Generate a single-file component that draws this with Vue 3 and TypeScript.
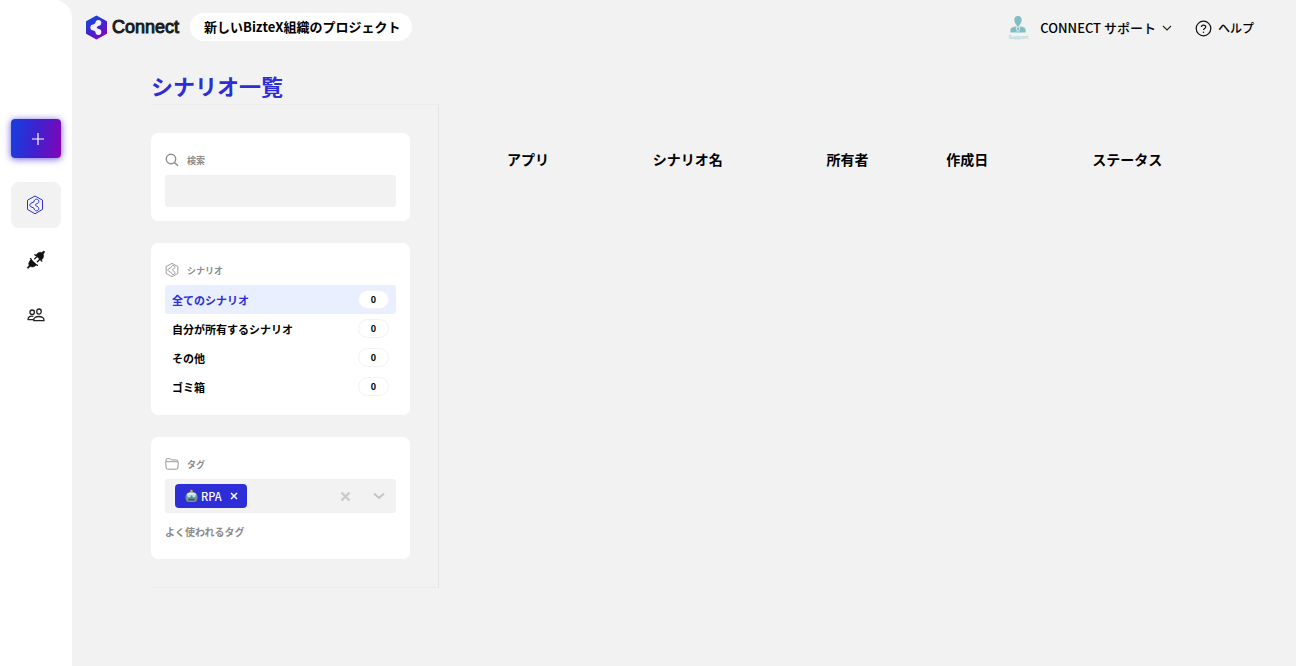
<script setup lang="ts">
import { ref } from 'vue'

interface ScenarioFilter {
  id: string
  label: string
  count: number
}

const filters: ScenarioFilter[] = [
  { id: 'all', label: '全てのシナリオ', count: 0 },
  { id: 'mine', label: '自分が所有するシナリオ', count: 0 },
  { id: 'other', label: 'その他', count: 0 },
  { id: 'trash', label: 'ゴミ箱', count: 0 },
]

const columns: string[] = ['アプリ', 'シナリオ名', '所有者', '作成日', 'ステータス']

const activeFilter = ref<string>('all')
const keyword = ref<string>('')
const tags = ref<string[]>(['RPA'])

function removeTag(tag: string): void {
  tags.value = tags.value.filter((t) => t !== tag)
}
</script>

<template>
  <div class="page">
    <nav class="rail" aria-label="メニュー">
      <button class="create" type="button" aria-label="新規作成">
        <svg width="14" height="14" viewBox="0 0 14 14"><path d="M7 1v12M1 7h12" stroke="#fff" stroke-width="1.2" fill="none" /></svg>
      </button>
      <a class="rail-item active" href="#scenarios" aria-label="シナリオ">
        <svg width="18" height="20" viewBox="0 0 18 20" fill="none" stroke="#2d2ed8" stroke-width="1" stroke-linejoin="round">
          <path d="M9 1l7.500 4.200v9.200L9 18.800l-7.500-4.400V5.200z" />
          <path d="M4.800 8.300 8 6.800C8 5.300 9.200 4.200 10.500 4.200c1.400 0 2.300 1 2.300 2.200 0 1.700-1.700 2.300-2.600 2.600-.9.400-.9 1.600 0 2 .9.300 2.600.9 2.600 2.600 0 1.200-.9 2.200-2.300 2.200-1.300 0-2.500-1.100-2.500-2.600L4.800 11.700C3.500 10.900 3.500 9.100 4.800 8.300z" />
        </svg>
      </a>
      <a class="rail-item" href="#connections" aria-label="接続">
        <svg width="20" height="20" viewBox="0 0 20 20" fill="#111" stroke="#111" stroke-linecap="round">
          <path d="M9.800 5.400l5.200 5c1.800-1.300 3.300-3.300 2.300-6.200l1.500-2.400-.8-.8-2.300 1.500c-2.700-1-4.700.800-5.900 2.900z" stroke-width=".5" />
          <path d="M5.300 9.500l5.200 5.100c-1.300 2.200-3.600 3-6.200 2l-2.400 2-.8-.8 1.900-2.300c-1-2.600.4-4.900 2.300-6z" stroke-width=".5" />
          <path d="M10.800 6.700 8.600 8.900M13.600 9.500l-2.200 2.200M5.200 9.300l-.7-.6M10.700 14.800l.7.600M9.600 5.200l-.7-.5M15.200 10.500l.6.600" stroke-width="1.300" />
        </svg>
      </a>
      <a class="rail-item" href="#members" aria-label="メンバー">
        <svg width="18" height="14" viewBox="0 0 18 14" fill="none" stroke="#222" stroke-width="1.300" stroke-linejoin="round">
          <circle cx="5.200" cy="4.200" r="2.200" />
          <ellipse cx="12" cy="3.600" rx="2.300" ry="2.600" />
          <path d="M6.800 12.700c-.4-2.700 2-4.200 5-4.200s5.500 1.500 5.200 4.200zM6.400 8.400C3.400 7.600.9 8.900 1 11.600h5.500" />
        </svg>
      </a>
    </nav>

    <div class="body">
      <header class="topbar">
        <a class="brand" href="#home">
          <svg width="23" height="25" viewBox="0 0 23 25">
            <defs>
              <linearGradient id="brandFill" x1=".2" y1="0" x2=".8" y2="1">
                <stop offset="0" stop-color="#1746dc" />
                <stop offset=".5" stop-color="#4323cf" />
                <stop offset="1" stop-color="#8308bb" />
              </linearGradient>
            </defs>
            <path d="M11.500 1.500 21 6.800v11.400l-9.500 5.300L2 18.200V6.800z" fill="url(#brandFill)" stroke="url(#brandFill)" stroke-width="2" stroke-linejoin="round" />
            <path d="M13.500 8 8.400 12.500l5.100 4.300" fill="none" stroke="#f0f2ff" stroke-width="4" stroke-linecap="round" stroke-linejoin="round" />
            <g fill="#f0f2ff"><circle cx="13.400" cy="7.800" r="2.900" /><circle cx="8.300" cy="12.500" r="2.900" /><circle cx="13.400" cy="17" r="2.900" /></g>
          </svg>
          <span>Connect</span>
        </a>
        <button class="project" type="button">新しいBizteX組織のプロジェクト</button>
        <div class="account">
          <button class="user" type="button">
            <span class="avatar">
              <svg width="16" height="17" viewBox="0 0 16 17" fill="#80bec1">
                <path d="M8 0c2.600 0 3.900 1.600 3.600 4.200-.2 2.300-1.200 4.200-2.400 5v1.300H6.800V9.200C5.600 8.400 4.600 6.500 4.400 4.200 4.100 1.600 5.400 0 8 0z" />
                <path d="M5.600 10.200 8 12l2.400-1.800 3.600 1.400c1.200.5 1.600 1.600 1.600 2.900v1.900H.4v-1.900c0-1.300.4-2.400 1.600-2.900z" />
                <path d="M6 10.800l1.300 5M10 10.800l-1.300 5" stroke="#eef5f5" stroke-width=".8" fill="none" />
              </svg>
              <span class="avatar-text">Support</span>
            </span>
            <span>CONNECT サポート</span>
            <svg width="10" height="7" viewBox="0 0 10 7"><path d="M1 1l4 4 4-4" fill="none" stroke="#222" stroke-width="1.100" /></svg>
          </button>
          <a class="help" href="#help">
            <svg width="17" height="17" viewBox="0 0 17 17" fill="none" stroke="#111" stroke-width="1.200">
              <circle cx="8.500" cy="8.500" r="7.300" />
              <path d="M6.400 7.100c0-2.700 4.300-2.700 4.300-.1 0 1.600-2.200 1.500-2.200 3.100" />
              <circle cx="8.500" cy="12.200" r=".7" fill="#111" stroke="none" />
            </svg>
            <span>ヘルプ</span>
          </a>
        </div>
      </header>

      <main class="main">
        <h1>シナリオ一覧</h1>
        <div class="columns">
          <aside class="filters">
            <section class="card">
              <label class="card-title" for="keyword">
                <svg width="14" height="14" viewBox="0 0 14 14" fill="none" stroke="#8c8c8c" stroke-width="1.400"><circle cx="6" cy="6" r="4.700" /><path d="M9.400 9.400 13 12.800" /></svg>
                <span>検索</span>
              </label>
              <input id="keyword" v-model="keyword" class="search" type="text" />
            </section>

            <section class="card">
              <h2 class="card-title">
                <svg width="14" height="16" viewBox="0 0 18 20" fill="none" stroke="#8c8c8c" stroke-width="1.100" stroke-linejoin="round">
                  <path d="M9 1.500l7.500 4v9L9 18.500l-7.500-4v-9z" />
                  <path d="M4.800 8.300 8 6.800C8 5.300 9.200 4.200 10.500 4.200c1.400 0 2.300 1 2.300 2.200 0 1.700-1.700 2.300-2.600 2.600-.9.400-.9 1.600 0 2 .9.300 2.600.9 2.600 2.600 0 1.200-.9 2.200-2.300 2.200-1.300 0-2.500-1.100-2.500-2.600L4.800 11.700C3.500 10.900 3.500 9.100 4.800 8.300z" />
                </svg>
                <span>シナリオ</span>
              </h2>
              <ul class="filter-list">
                <li v-for="item in filters" :key="item.id">
                  <button type="button" class="filter" :class="{ selected: item.id === activeFilter }" @click="activeFilter = item.id">
                    <span>{{ item.label }}</span>
                    <span class="count">{{ item.count }}</span>
                  </button>
                </li>
              </ul>
            </section>

            <section class="card">
              <h2 class="card-title">
                <svg width="14" height="12" viewBox="0 0 14 12" fill="none" stroke="#999" stroke-width="1" stroke-linejoin="round"><path d="M1 3.500V1.800C1 1 1.400.7 2 .7h3l1.200 1.200h5.200c.8 0 1.200.4 1.200 1.100v.5M.7 3.700h12.600l-.4 6.300c0 .8-.5 1.200-1.200 1.200H2.300c-.7 0-1.200-.4-1.200-1.200z" /></svg>
                <span>タグ</span>
              </h2>
              <div class="tag-select">
                <span v-for="tag in tags" :key="tag" class="tag">
                  <svg width="13" height="14" viewBox="0 0 14 14">
                    <path d="M7 1v3" stroke="#f0a020" stroke-width="1.600" />
                    <circle cx="7" cy="1.500" r="1.300" fill="#f4a423" />
                    <rect x="0" y="6" width="14" height="5" rx="2" fill="#55717d" />
                    <path d="M1 6c.5-2.400 2.700-3.300 6-3.300S12.500 3.600 13 6l-.3 5.500c-.2 1.500-1.900 2-5.700 2s-5.500-.5-5.700-2z" fill="#77949c" />
                    <path d="M2.200 4.600C4 2.800 10 2.800 11.800 4.600v1.600H2.200z" fill="#dceaec" />
                    <circle cx="4.300" cy="6.700" r="1.700" fill="#a5f0ef" /><circle cx="9.700" cy="6.700" r="1.700" fill="#a5f0ef" />
                    <path d="M6.200 9 7 7.400 7.800 9z" fill="#db4a4a" />
                    <rect x="3.500" y="10" width="7" height="1.800" rx=".8" fill="#36575e" />
                  </svg>
                  <span class="tag-name">{{ tag }}</span>
                  <button class="tag-remove" type="button" aria-label="タグを外す" @click="removeTag(tag)">
                    <svg width="8" height="8" viewBox="0 0 8 8"><path d="M1 1l6 6M7 1 1 7" stroke="#fff" stroke-width="1.500" /></svg>
                  </button>
                </span>
                <button class="plain clear" type="button" aria-label="すべて外す" @click="tags = []">
                  <svg width="11" height="11" viewBox="0 0 11 11"><path d="M1.500 1.500l8 8M9.500 1.500l-8 8" stroke="#c9c9c9" stroke-width="2.200" /></svg>
                </button>
                <button class="plain" type="button" aria-label="タグを選ぶ">
                  <svg width="12" height="8" viewBox="0 0 12 8"><path d="M1 1.500l5 4.500 5-4.500" fill="none" stroke="#c4c4c4" stroke-width="2" /></svg>
                </button>
              </div>
              <p class="common-tags">よく使われるタグ</p>
            </section>
          </aside>

          <table class="scenarios">
            <thead>
              <tr>
                <th v-for="column in columns" :key="column" scope="col">{{ column }}</th>
              </tr>
            </thead>
          </table>
        </div>
      </main>
    </div>
  </div>
</template>

<style>
body {
  margin: 0;
  background: #f2f2f2;
}
</style>

<style scoped>
.page {
  display: flex;
  min-height: 100vh;
  background: #f2f2f2;
  color: #000;
  font-family: "Noto Sans CJK JP", sans-serif;
}
.page *,
.page {
  box-sizing: border-box;
}
button,
input {
  margin: 0;
  border: 0;
  padding: 0;
  background: none;
  color: inherit;
  font-family: inherit;
}
button {
  cursor: pointer;
}
a {
  color: inherit;
  text-decoration: none;
}
svg {
  display: block;
  flex: none;
}
.rail {
  display: flex;
  flex: none;
  flex-direction: column;
  align-items: center;
  gap: 9px;
  width: 72px;
  padding-top: 119px;
  border-top-right-radius: 18px;
  background: #fff;
}
.create {
  display: flex;
  align-items: center;
  justify-content: center;
  width: 50px;
  height: 39px;
  margin-bottom: 15px;
  padding-left: 4px;
  border-radius: 4px;
  background: linear-gradient(100deg, #1c3bdc 10%, #3a24d0 45%, #7e06ba 95%);
  box-shadow: 0 1px 7px rgba(60, 30, 210, 0.75);
}
.rail-item {
  display: flex;
  align-items: center;
  justify-content: center;
  width: 50px;
  height: 46px;
  border-radius: 8px;
}
.rail-item.active {
  padding-right: 2px;
  background: #f2f2f2;
}
.body {
  flex: 1;
  min-width: 0;
}
.topbar {
  display: flex;
  align-items: center;
  height: 54px;
  padding: 0 42px 0 13px;
}
.brand {
  display: flex;
  align-items: center;
  gap: 4px;
  margin-right: 11px;
  color: #1a1a1a;
  font: 18px/26px "Liberation Sans", sans-serif;
  -webkit-text-stroke: 1px #1a1a1a;
}
.project {
  height: 28px;
  padding: 0 12px 0 14px;
  border-radius: 14px;
  background: #fff;
  font-size: 13px;
  font-weight: 700;
  line-height: 28px;
}
.account {
  display: flex;
  align-items: center;
  gap: 23px;
  margin-left: auto;
  padding-top: 2px;
}
.user {
  display: flex;
  align-items: center;
  font-size: 13px;
  font-weight: 500;
  line-height: 20px;
}
.user > svg {
  margin-left: 6px;
}
.avatar {
  display: flex;
  flex-direction: column;
  align-items: center;
  margin-right: 12px;
  color: #8cc6c9;
}
.avatar-text {
  font: 5px/8px "DejaVu Sans", sans-serif;
}
.help {
  display: flex;
  align-items: center;
  gap: 6px;
  font-size: 12px;
  font-weight: 500;
  line-height: 20px;
}
.main {
  padding: 16px 49px 0 79px;
}
h1 {
  margin: 0;
  padding-bottom: 4px;
  color: #2d2ed8;
  font-size: 22px;
  font-weight: 700;
  line-height: 30px;
}
.columns {
  display: flex;
  align-items: flex-start;
  gap: 9px;
}
.filters {
  display: flex;
  flex: none;
  flex-direction: column;
  gap: 22px;
  width: 288px;
  padding: 28px 28px 28px 0;
  border: 1px solid #ececec;
  border-right-color: #e4e4e4;
  border-left: 0;
}
.card {
  padding: 14px;
  border-radius: 7px;
  background: #fff;
}
.card-title {
  display: flex;
  align-items: center;
  gap: 8px;
  height: 28px;
  margin: 0;
  padding-bottom: 2px;
  color: #8c8c8c;
  font-size: 9px;
  font-weight: 700;
}
.search {
  display: block;
  width: 100%;
  height: 32px;
  padding: 0 8px;
  border-radius: 3px;
  background: #f2f2f2;
  font-size: 11px;
}
.filter-list {
  margin: 0;
  padding: 0;
  list-style: none;
}
.filter {
  display: flex;
  align-items: center;
  justify-content: space-between;
  width: 100%;
  height: 29px;
  padding: 0 7px;
  border-radius: 3px;
  font-size: 11px;
  font-weight: 700;
}
.filter.selected {
  background: #eaefff;
  color: #2d2ed8;
}
.count {
  width: 31px;
  height: 19px;
  border: 1px solid #f2f2f2;
  border-radius: 10px;
  background: #fff;
  color: #000;
  font-size: 9px;
  line-height: 18px;
  text-align: center;
}
.tag-select {
  display: flex;
  align-items: center;
  height: 34px;
  padding: 0 11px 0 10px;
  border-radius: 3px;
  background: #f2f2f2;
}
.tag {
  display: flex;
  align-items: center;
  height: 24px;
  padding: 0 9px 0 10px;
  border-radius: 4px;
  background: #2d2ed8;
  color: #fff;
  font-size: 11px;
  font-weight: 500;
}
.tag-name {
  margin: 0 8px 0 3px;
}
.plain {
  display: flex;
}
.clear {
  margin-right: 22px;
  margin-left: auto;
}
.common-tags {
  margin: 0;
  padding-top: 6px;
  color: #8c8c8c;
  font-size: 10px;
  font-weight: 700;
  line-height: 26px;
}
.scenarios {
  flex: 1;
  margin-top: 45px;
  border-collapse: collapse;
  table-layout: fixed;
}
th {
  width: 20%;
  padding: 0;
  font-size: 14px;
  font-weight: 700;
  line-height: 20px;
  text-align: center;
}
th:nth-child(4) {
  width: 10%;
}
th:nth-child(5) {
  width: 30%;
}
</style>
